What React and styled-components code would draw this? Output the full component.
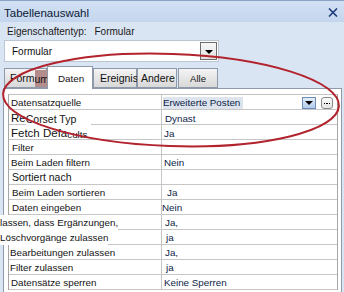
import React from 'react';
import styled, { createGlobalStyle } from 'styled-components';

const Global = createGlobalStyle`
  html, body { margin: 0; padding: 0; background: #dae5f3; }
  body { font-family: "Liberation Sans", Arial, sans-serif; }
  #root { width: 344px; height: 292px; }
`;

const Window = styled.div`
  position: relative;
  width: 344px;
  height: 292px;
  overflow: hidden;
  background: #dae5f3;
  display: flex;
  flex-direction: column;
`;

const TitleBar = styled.div`
  height: 22px;
  box-sizing: border-box;
  border-top: 1px solid #8aa4c8;
  background: linear-gradient(#d2e0f3, #c4d6ee);
  display: flex;
  align-items: center;
  justify-content: space-between;
  padding: 2px 6px 0 4px;
`;

const Title = styled.span`
  font-size: 11.5px;
  color: #0b1a33;
`;

const TypeRow = styled.div`
  height: 18px;
  display: flex;
  align-items: center;
  gap: 8px;
  padding-left: 7px;
  font-size: 10px;
  color: #1a1a1a;
`;

const Combo = styled.div`
  margin-left: 4px;
  width: 215px;
  height: 22px;
  box-sizing: border-box;
  background: #fff;
  border: 1px solid #bcc6d2;
  display: flex;
  align-items: center;
  justify-content: space-between;
  padding: 0 1px 0 7px;
  font-size: 10px;
  color: #111;
`;

const ComboButton = styled.div`
  width: 17px;
  height: 18px;
  box-sizing: border-box;
  border: 1px solid #6d6d6d;
  background: linear-gradient(#f7f7f7, #e2e2e2);
  display: flex;
  align-items: center;
  justify-content: center;
`;

const Arrow = styled.span`
  width: 0;
  height: 0;
  border-left: 4px solid transparent;
  border-right: 4px solid transparent;
  border-top: 4px solid #000;
  margin-top: 1px;
`;

const TabStrip = styled.div`
  height: 22px;
  margin-top: 4px;
  padding-left: 4px;
  display: flex;
  align-items: flex-end;
  position: relative;
  z-index: 1;
`;

const Tab = styled.div`
  width: ${p => p.$w}px;
  height: ${p => (p.$active ? 23 : 20)}px;
  margin-bottom: ${p => (p.$active ? -1 : 0)}px;
  margin-right: ${p => p.$gap || 0}px;
  box-sizing: border-box;
  border: 1px solid #8e9aaa;
  border-bottom: ${p => (p.$active ? 'none' : '1px solid #8e9aaa')};
  background: ${p => (p.$active ? '#fff' : 'linear-gradient(#f4f4f4, #d9d9d9)')};
  display: flex;
  align-items: center;
  justify-content: ${p => (p.$center ? 'center' : 'flex-start')};
  padding-left: ${p => (p.$center ? 0 : p.$pad)}px;
  font-size: ${p => p.$fs}px;
  color: #111;
  white-space: nowrap;
  overflow: visible;
`;

const Smudge = styled.span`
  background: #b48c8c;
  padding: 3px 0 2px;
`;

const Page = styled.div`
  flex: 1;
  background: #fff;
  border: 1px solid #8e9aaa;
  border-bottom: none;
  margin: 0 2px 0 3px;
  padding: 5px 3px 0 4px;
`;

const Grid = styled.div`
  border-top: 1px solid #c2c2c2;
  border-left: 1px solid #a6a6a6;
  border-right: 1px solid #a6a6a6;
`;

const Row = styled.div`
  display: grid;
  grid-template-columns: 153px 1fr;
  height: 15px;
  box-sizing: border-box;
  border-bottom: 1px solid #c6c6c6;
`;

const Label = styled.div`
  border-right: 1px solid #c6c6c6;
  padding-left: ${p => p.$pad}px;
  margin-left: ${p => p.$shift || 0}px;
  font-size: ${p => p.$fs || 9.8}px;
  line-height: 15px;
  color: #141414;
  white-space: nowrap;
  display: flex;
  align-items: center;
`;

const Plain = styled.span`
  background: ${p => (p.$bg ? '#fff' : 'transparent')};
  font-size: ${p => p.$fs}px;
  padding-top: ${p => p.$down || 0}px;
`;

const Value = styled.div`
  padding-left: ${p => p.$pad}px;
  font-size: 9.8px;
  line-height: 15px;
  color: #0d1e48;
  white-space: nowrap;
  display: flex;
  align-items: center;
`;

const Highlight = styled.span`
  background: #dde4ee;
  width: 80px;
  height: 12px;
  line-height: 12px;
  margin-top: 1px;
`;

const Spacer = styled.span`
  flex: 1;
`;

const DropBtn = styled.div`
  width: 14px;
  height: 12px;
  box-sizing: border-box;
  border: 1px solid #6c8cb6;
  background: linear-gradient(#e3eefb, #b2cbea);
  display: flex;
  align-items: center;
  justify-content: center;
  margin-right: 5px;
`;

const DotsBtn = styled.div`
  width: 12px;
  height: 12px;
  box-sizing: border-box;
  border: 1px solid #8a8a8a;
  border-radius: 3px;
  background: linear-gradient(#fafafa, #e4e4e4);
  display: flex;
  align-items: center;
  justify-content: center;
  gap: 1px;
  margin-right: 4px;
`;

const Dot = styled.span`
  width: 1.5px;
  height: 1.5px;
  background: #000;
  margin-top: 2px;
`;

const Overlay = styled.svg`
  position: absolute;
  left: 0;
  top: 0;
  pointer-events: none;
  z-index: 5;
`;

const rows = [
  { label: 'Datensatzquelle', pad: 2, value: 'source' },
  { label: 'corset', pad: 2, value: 'Dynast', vpad: 3 },
  { label: 'fetch', pad: 2, value: 'Ja', vpad: 2 },
  { label: 'Filter', pad: 3, value: '' },
  { label: 'Beim Laden filtern', pad: 2, value: 'Nein', vpad: 2 },
  { label: 'Sortiert nach', pad: 3, value: '', fs: 10.5 },
  { label: 'Beim Laden sortieren', pad: 3, value: 'Ja', vpad: 5 },
  { label: 'Daten eingeben', pad: 3, value: 'Nein', vpad: 0 },
  { label: 'lassen, dass Ergänzungen,', pad: 0, shift: -9, bg: true, value: 'Ja,', vpad: 3 },
  { label: 'Löschvorgänge zulassen', pad: 0, shift: -9, bg: true, value: 'ja', vpad: 4 },
  { label: 'Bearbeitungen zulassen', pad: 1, value: 'Ja,', vpad: 3 },
  { label: 'Filter zulassen', pad: 1, value: 'ja', vpad: 4 },
  { label: 'Datensätze sperren', pad: 2, value: 'Keine Sperren', vpad: 2 },
];

function renderLabel(r) {
  if (r.label === 'corset') {
    return (
      <Label $pad={r.pad}>
        <Plain $fs={11.5}>Re</Plain>
        <Plain $fs={10.5} $bg $down={2}>Corset Typ&nbsp;&nbsp;&nbsp;&nbsp;&nbsp;</Plain>
      </Label>
    );
  }
  if (r.label === 'fetch') {
    return (
      <Label $pad={r.pad}>
        <Plain $fs={11.5}>Fetch Defa</Plain>
        <Plain $fs={9.8} $down={2}>cults</Plain>
      </Label>
    );
  }
  return (
    <Label $pad={r.pad} $shift={r.shift} $fs={r.fs}>
      {r.bg ? <Plain $fs={9.8} $bg>{r.label}</Plain> : r.label}
    </Label>
  );
}

function renderValue(r) {
  if (r.value === 'source') {
    return (
      <Value $pad={1}>
        <Highlight>Erweiterte Posten</Highlight>
        <Spacer />
        <DropBtn><Arrow /></DropBtn>
        <DotsBtn><Dot /><Dot /><Dot /></DotsBtn>
      </Value>
    );
  }
  return <Value $pad={r.vpad}>{r.value}</Value>;
}

export default function App() {
  return (
    <>
      <Global />
      <Window>
        <TitleBar>
          <Title>Tabellenauswahl</Title>
          <svg width="10" height="9" viewBox="0 0 10 9">
            <path d="M1 0.5 L9 8.5 M9 0.5 L1 8.5" stroke="#1e3d78" strokeWidth="1.6" fill="none" />
          </svg>
        </TitleBar>
        <TypeRow>
          <span>Eigenschaftentyp:</span>
          <span>Formular</span>
        </TypeRow>
        <Combo>
          <span>Formular</span>
          <ComboButton><Arrow /></ComboButton>
        </Combo>
        <TabStrip>
          <Tab $w={43} $pad={5} $fs={10.5}>Form<Smudge>um</Smudge></Tab>
          <Tab $w={46} $pad={10} $fs={9.8} $active>Daten</Tab>
          <Tab $w={44} $pad={6} $fs={10.5}>Ereignis</Tab>
          <Tab $w={40} $pad={3} $fs={10.5} $gap={1}>Andere</Tab>
          <Tab $w={40} $fs={9.5} $center>Alle</Tab>
        </TabStrip>
        <Page>
          <Grid>
            {rows.map((r, i) => (
              <Row key={i}>
                {renderLabel(r)}
                {renderValue(r)}
              </Row>
            ))}
          </Grid>
        </Page>
        <Overlay width="344" height="292" viewBox="0 0 344 292">
          <ellipse cx="171" cy="100" rx="168" ry="46" fill="none" stroke="#b2232d" strokeWidth="2" transform="rotate(2 171 100)" />
        </Overlay>
      </Window>
    </>
  );
}
